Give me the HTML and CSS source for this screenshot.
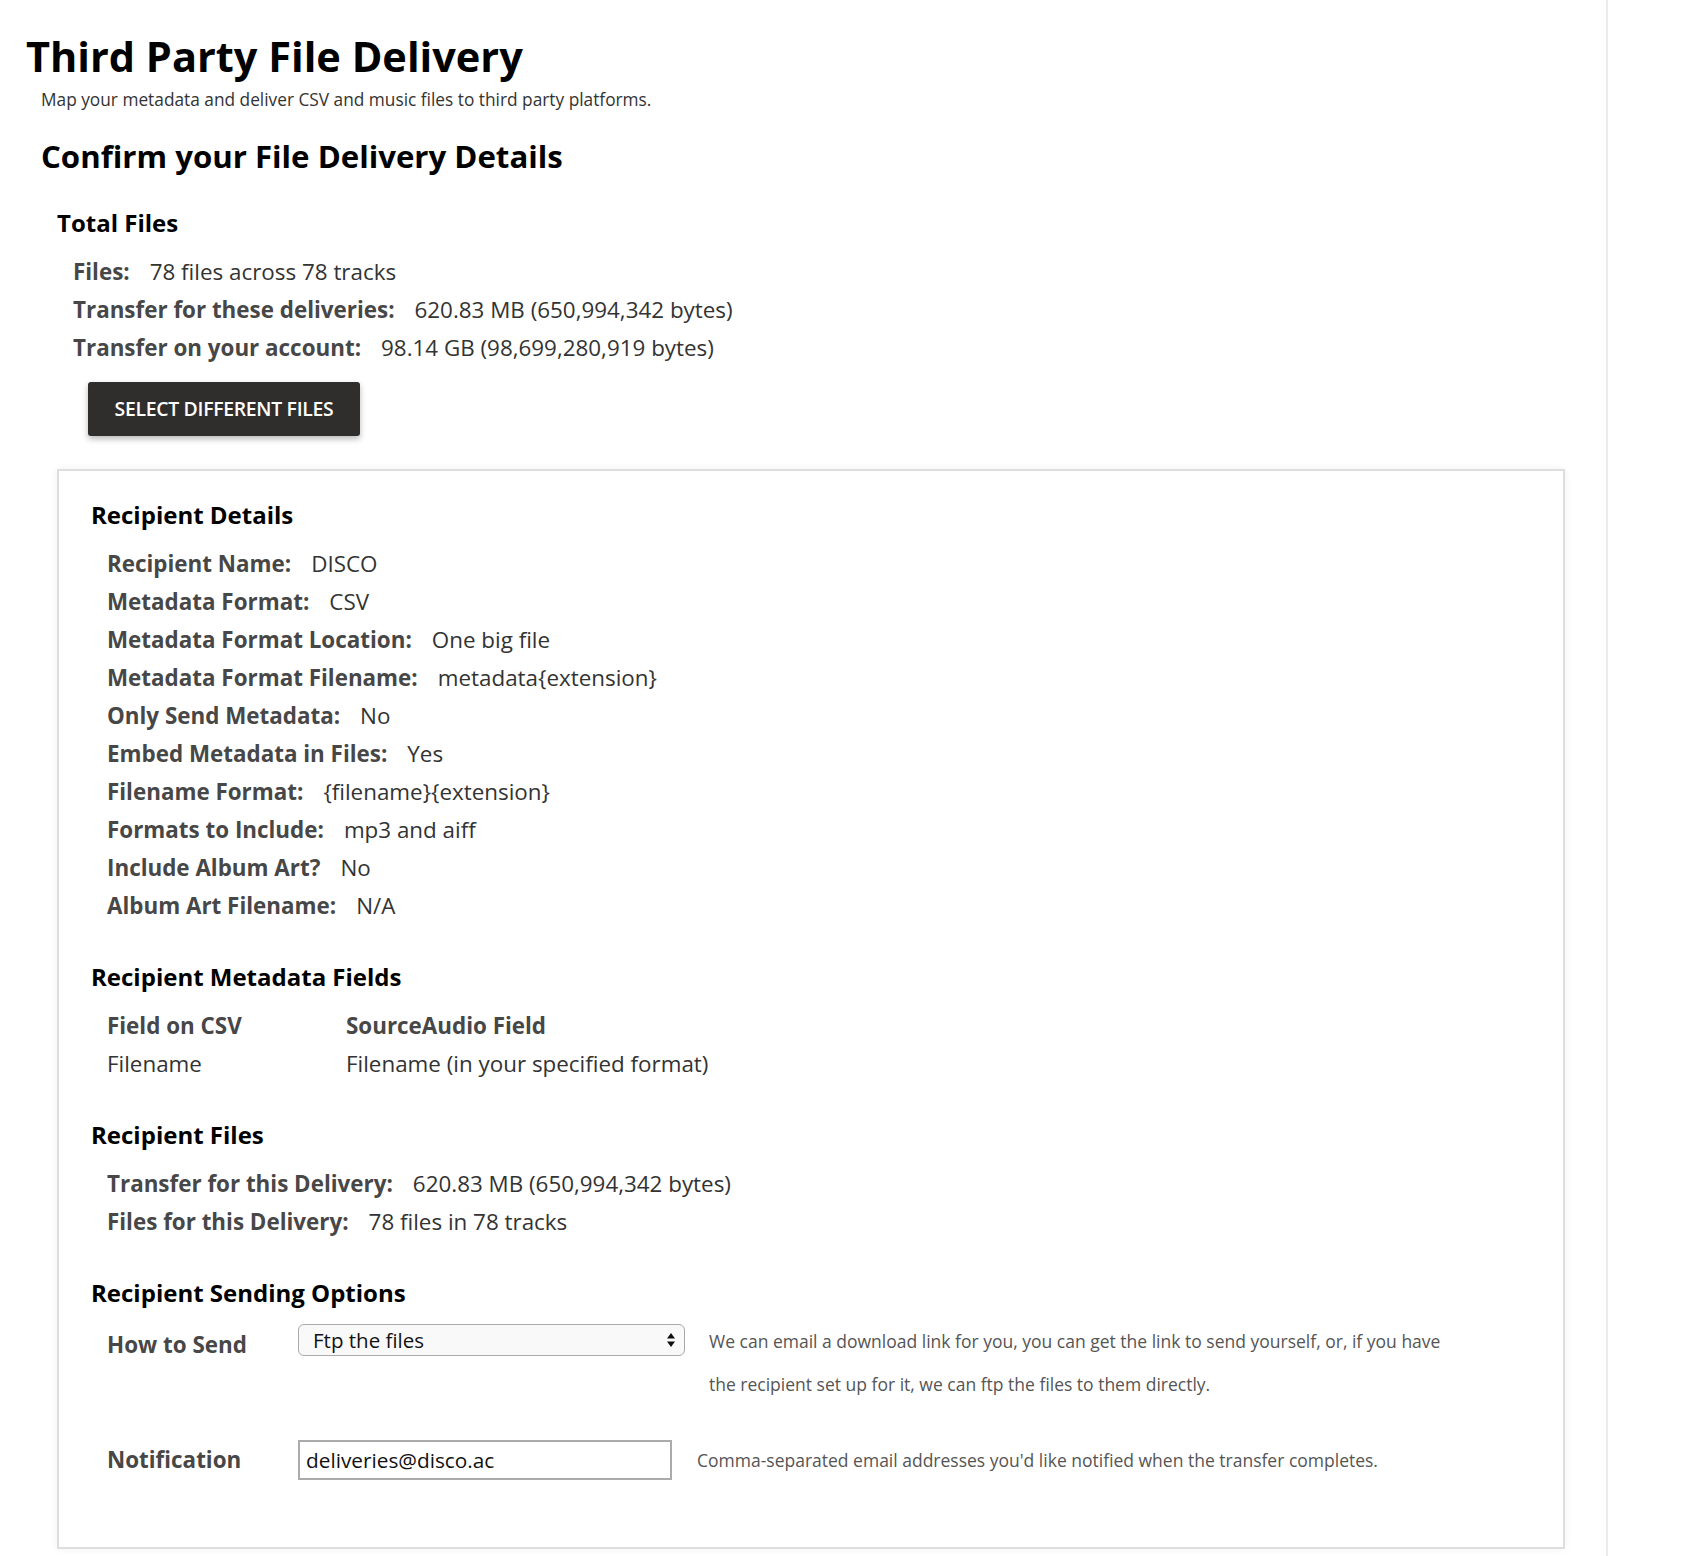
FILE: index.html
```html
<!DOCTYPE html>
<html lang="en">
<head>
<meta charset="utf-8">
<title>Third Party File Delivery</title>
<link rel="stylesheet" href="styles.css">
</head>
<body>
<div class="page">
  <h1 class="title">Third Party File Delivery</h1>
  <p class="subtitle">Map your metadata and deliver CSV and music files to third party platforms.</p>
  <h2 class="step-title">Confirm your File Delivery Details</h2>

  <section class="summary">
    <h3 class="section-title">Total Files</h3>
    <dl class="details">
      <div class="detail"><dt>Files:</dt><dd>78 files across 78 tracks</dd></div>
      <div class="detail"><dt>Transfer for these deliveries:</dt><dd>620.83 MB (650,994,342 bytes)</dd></div>
      <div class="detail"><dt>Transfer on your account:</dt><dd>98.14 GB (98,699,280,919 bytes)</dd></div>
    </dl>
    <button class="btn-dark" type="button">SELECT DIFFERENT FILES</button>
  </section>

  <div class="card">
    <h3 class="section-title first">Recipient Details</h3>
    <dl class="details">
      <div class="detail"><dt>Recipient Name:</dt><dd>DISCO</dd></div>
      <div class="detail"><dt>Metadata Format:</dt><dd>CSV</dd></div>
      <div class="detail"><dt>Metadata Format Location:</dt><dd>One big file</dd></div>
      <div class="detail"><dt>Metadata Format Filename:</dt><dd>metadata{extension}</dd></div>
      <div class="detail"><dt>Only Send Metadata:</dt><dd>No</dd></div>
      <div class="detail"><dt>Embed Metadata in Files:</dt><dd>Yes</dd></div>
      <div class="detail"><dt>Filename Format:</dt><dd>{filename}{extension}</dd></div>
      <div class="detail"><dt>Formats to Include:</dt><dd>mp3 and aiff</dd></div>
      <div class="detail"><dt>Include Album Art?</dt><dd>No</dd></div>
      <div class="detail"><dt>Album Art Filename:</dt><dd>N/A</dd></div>
    </dl>

    <h3 class="section-title">Recipient Metadata Fields</h3>
    <table class="fields">
      <thead>
        <tr><th class="col-csv">Field on CSV</th><th>SourceAudio Field</th></tr>
      </thead>
      <tbody>
        <tr><td>Filename</td><td>Filename (in your specified format)</td></tr>
      </tbody>
    </table>

    <h3 class="section-title">Recipient Files</h3>
    <dl class="details">
      <div class="detail"><dt>Transfer for this Delivery:</dt><dd>620.83 MB (650,994,342 bytes)</dd></div>
      <div class="detail"><dt>Files for this Delivery:</dt><dd>78 files in 78 tracks</dd></div>
    </dl>

    <h3 class="section-title">Recipient Sending Options</h3>
    <div class="form">
      <div class="form-row top">
        <label class="form-label send-label" for="how">How to Send</label>
        <div class="select-wrap">
          <select id="how" class="select">
            <option>Ftp the files</option>
            <option>Email a download link</option>
            <option>Get the link</option>
          </select>
          <svg class="select-arrows" width="10" height="16" viewBox="0 0 10 16" aria-hidden="true">
            <path d="M5 1 L9 6.5 L1 6.5 Z" fill="#111"/>
            <path d="M5 15 L9 9.5 L1 9.5 Z" fill="#111"/>
          </svg>
        </div>
        <p class="help help-send">We can email a download link for you, you can get the link to send yourself, or, if you have the recipient set up for it, we can ftp the files to them directly.</p>
      </div>
      <div class="form-row center">
        <label class="form-label" for="notify">Notification</label>
        <input id="notify" class="text-input" type="text" value="deliveries@disco.ac">
        <p class="help help-notify">Comma-separated email addresses you'd like notified when the transfer completes.</p>
      </div>
    </div>
  </div>
</div>
</body>
</html>
```

FILE: styles.css
```css
* {
  box-sizing: border-box;
}

html, body {
  margin: 0;
  padding: 0;
  background: #fff;
}

body {
  font-family: "Open Sans", "Liberation Sans", Arial, sans-serif;
  color: #333;
}

.page {
  width: 1608px;
  min-height: 100vh;
  border-right: 2px solid #ebebeb;
  padding: 31px 0 0 26px;
}

.title {
  margin: 0;
  font-size: 41.5px;
  line-height: 50px;
  font-weight: 700;
  color: #000;
}

.subtitle {
  margin: 8px 0 0 15px;
  font-size: 17.3px;
  line-height: 22px;
  color: #333;
}

.step-title {
  margin: 25px 0 0 15px;
  font-size: 31.2px;
  line-height: 40px;
  font-weight: 700;
  color: #000;
}

.summary {
  margin-left: 31px;
}

.section-title {
  margin: 31px 0 0;
  font-size: 24px;
  line-height: 32px;
  font-weight: 700;
  color: #000;
}

.card .section-title {
  margin-top: 36px;
}

.card .section-title.first {
  margin-top: 0;
}

.details {
  margin: 14px 0 0 16px;
  padding: 0;
}

.detail {
  display: flex;
  gap: 20px;
  font-size: 22.4px;
  line-height: 38px;
}

.detail dt {
  font-weight: 700;
  color: #474747;
}

.detail dd {
  margin: 0;
  color: #333;
}

.btn-dark {
  display: block;
  margin: 15px 0 0 31px;
  width: 272px;
  height: 54px;
  padding: 0 0 2px;
  border: none;
  border-radius: 3px;
  background: #302e2d;
  color: #fff;
  font-family: "Open Sans", "Liberation Sans", Arial, sans-serif;
  font-size: 19.4px;
  font-weight: 600;
  letter-spacing: -0.3px;
  box-shadow: 0 3px 6px rgba(0, 0, 0, 0.28);
}

.card {
  margin: 33px 0 0 31px;
  width: 1508px;
  border: 2px solid #dedede;
  background: #fff;
  box-shadow: 0 0 8px rgba(0, 0, 0, 0.06);
  padding: 28px 32px 67px;
}

.fields {
  margin: 14px 0 0 16px;
  border-collapse: collapse;
  font-size: 22.4px;
  line-height: 38px;
}

.fields th,
.fields td {
  padding: 0;
  text-align: left;
}

.fields th {
  font-weight: 700;
  color: #474747;
}

.fields td {
  color: #333;
}

.fields .col-csv {
  width: 239px;
}

.form {
  margin: 11px 0 0 16px;
}

.form-row {
  display: flex;
}

.form-row.top {
  align-items: flex-start;
}

.form-row.center {
  margin-top: 34px;
  align-items: center;
}

.form-label {
  width: 191px;
  flex: none;
  font-size: 22.4px;
  line-height: 38px;
  font-weight: 700;
  color: #474747;
}

.send-label {
  margin-top: 6px;
}

.select-wrap {
  position: relative;
  flex: none;
  width: 387px;
  height: 32px;
  margin-top: 4px;
}

.select {
  appearance: none;
  -webkit-appearance: none;
  width: 100%;
  height: 100%;
  margin: 0;
  padding: 0 30px 0 14px;
  border: 1.5px solid #a9a9a9;
  border-radius: 6px;
  background: #f9f9f9;
  font-family: "Open Sans", "Liberation Sans", Arial, sans-serif;
  font-size: 20.5px;
  color: #111;
}

.select-arrows {
  position: absolute;
  right: 9px;
  top: 8px;
  pointer-events: none;
}

.help {
  margin: 0;
  font-size: 17.5px;
  color: #555;
}

.help-send {
  margin-left: 24px;
  width: 750px;
  line-height: 43px;
}

.text-input {
  flex: none;
  width: 374px;
  height: 40px;
  margin: 0;
  padding: 0 6px;
  border: 2px solid #ababab;
  border-radius: 0;
  font-family: "Open Sans", "Liberation Sans", Arial, sans-serif;
  font-size: 20.8px;
  color: #111;
  background: #fff;
}

.help-notify {
  margin-left: 25px;
  line-height: 22px;
}
```
